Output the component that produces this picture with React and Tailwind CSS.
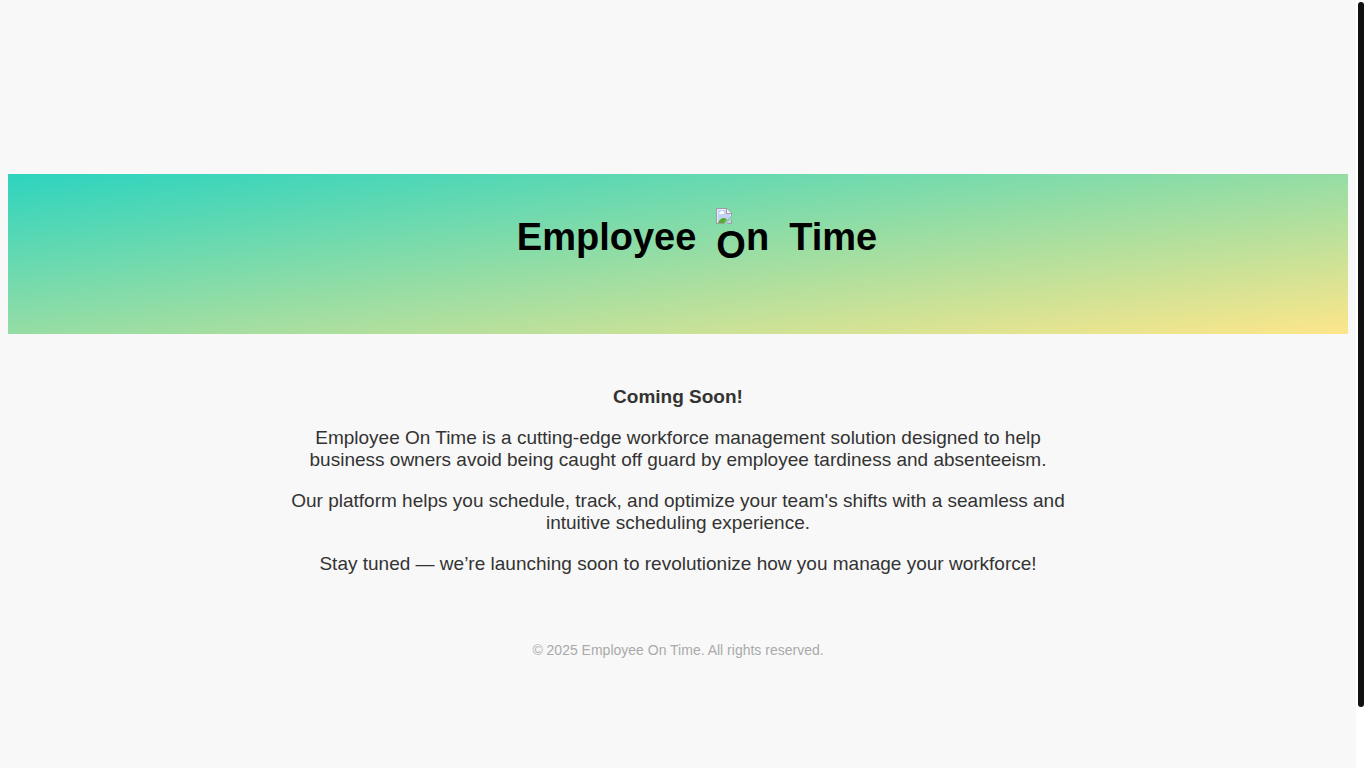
import React from 'react'

const MissingImage = () => {
    return (
        <svg width="16" height="16" viewBox="0 0 16 16" aria-hidden="true" className="block">
            {/* page with a folded corner and a tear across the lower right */}
            <path d="M0 0H11L16 5V8L8 16H0Z" fill="#a09ba4" />
            <path d="M1 1H10V6H15V8L8 15H1Z" fill="#e4ecfb" />
            <path d="M2 2H10V6H14V9L8 14H2Z" fill="#c3d3f5" />
            <path d="M11 1V5H15Z" fill="#f5f5f7" />
            <path d="M10 1H11V5H15V6H10Z" fill="#a09ba4" />
            <path d="M3 6V5H4V4H5V3H7V4H8V6Z" fill="#fff" />
            <path d="M2 15C3 12 5 10 7.500 10C9 10 10 10.500 11 11.500L8 15Z" fill="#55ad36" />
            <path d="M16 11V16H11Z" fill="#a09ba4" />
            <path d="M15 11V15H11Z" fill="#c3d3f5" />
        </svg>
    )
}

const Header = () => {
    return (
        <header className="mx-2 h-40 pt-[34px] pl-[38px] bg-[linear-gradient(to_bottom_right,#2dd4bf,#fde68a)]">
            <h1 className="flex items-center justify-center gap-5 text-[38px] leading-[43px] font-bold text-black">
                <span>Employee</span>
                <span className="flex items-center">
                    <span className="flex flex-col">
                        <MissingImage />
                        <span>O</span>
                    </span>
                    <span>n</span>
                </span>
                <span>Time</span>
            </h1>
        </header>
    )
}

const Scrollbar = () => {
    return (
        <div className="sticky top-0 h-screen w-[10px] shrink-0 bg-white p-0.5">
            <div className="h-12/13 rounded-full bg-[#111111]"></div>
        </div>
    )
}

const App = () => {
    return (
        <div className="flex min-h-screen bg-[#f8f8f8] font-['Liberation_Sans',Arial,sans-serif]">
            <div className="flex-1 pt-[174px]">
                <Header />
                <main className="mx-auto mt-[52px] flex max-w-[800px] flex-col gap-[19px] text-center text-[19px] leading-[22px] text-[#333333]">
                    <p><strong>Coming Soon!</strong></p>
                    <p>
                        Employee On Time is a cutting-edge workforce management solution designed to help
                        business owners avoid being caught off guard by employee tardiness and absenteeism.
                    </p>
                    <p>
                        Our platform helps you schedule, track, and optimize your team's shifts with a seamless and
                        intuitive scheduling experience.
                    </p>
                    <p>Stay tuned — we’re launching soon to revolutionize how you manage your workforce!</p>
                </main>
                <footer className="mt-[67px] text-center text-[14px] leading-4 text-[#aaaaaa]">
                    © 2025 Employee On Time. All rights reserved.
                </footer>
            </div>
            <Scrollbar />
        </div>
    )
}

export default App
